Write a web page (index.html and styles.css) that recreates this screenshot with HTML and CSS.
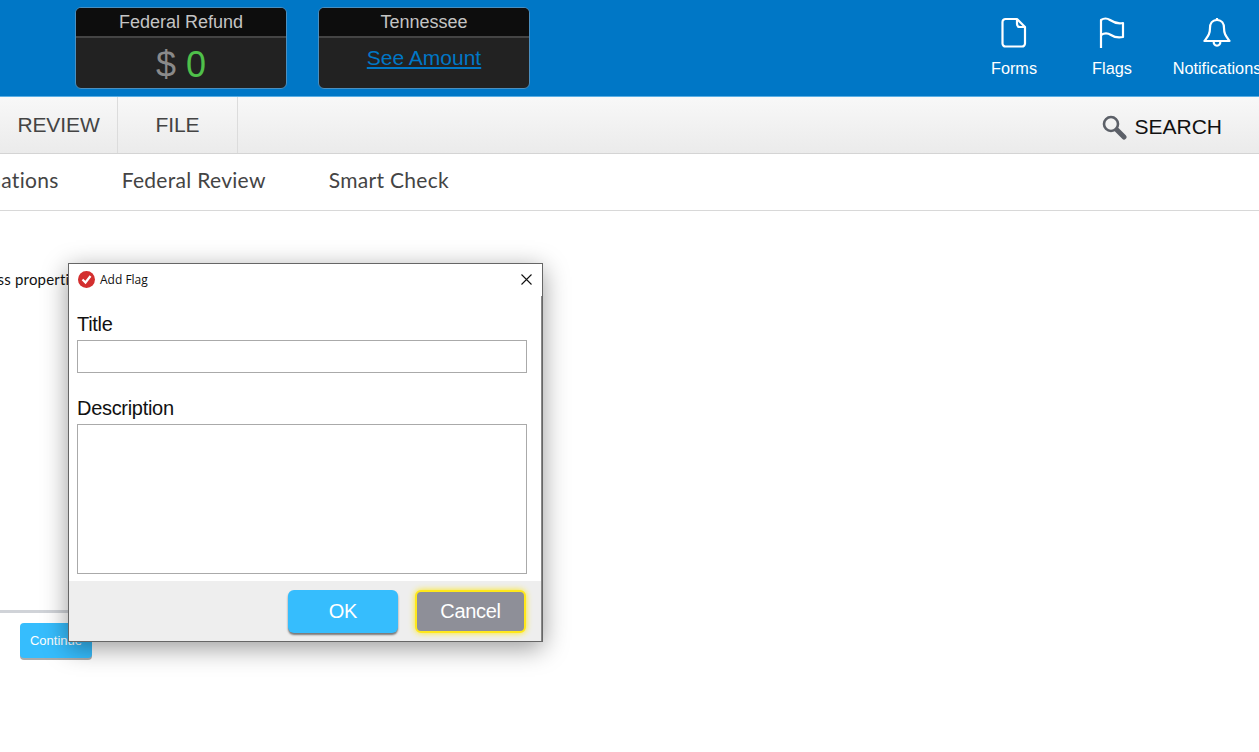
FILE: index.html
```html
<!DOCTYPE html>
<html lang="en">
  <head>
    <meta charset="UTF-8" />
    <title>Add Flag</title>
    <link rel="stylesheet" href="styles.css">
  </head>
  <body>
    <header class="topbar">
      <div class="refund-card">
        <div class="refund-title">Federal Refund</div>
        <div class="refund-body"><span class="dollar">$</span> <span class="amount">0</span></div>
      </div>
      <div class="refund-card">
        <div class="refund-title">Tennessee</div>
        <div class="refund-link"><a class="see-amount" href="#">See Amount</a></div>
      </div>
      <div class="tools">
        <a class="tool tool-forms" href="#">
          <svg width="26" height="32" viewBox="0 0 26 32" fill="none" stroke="#fff" stroke-width="2.200" stroke-linejoin="round">
            <path d="M4.500 2H16l8 8v16.500a3 3 0 0 1-3 3H4.500a3 3 0 0 1-3-3V5a3 3 0 0 1 3-3z"/>
            <path d="M16 2v5a3 3 0 0 0 3 3h5"/>
          </svg>
          <span>Forms</span>
        </a>
        <a class="tool tool-flags" href="#">
          <svg width="26" height="32" viewBox="0 0 26 32" fill="none" stroke="#fff" stroke-width="2.200" stroke-linejoin="round">
            <path d="M2 31V3c3-2 6-2 9 0 3 2 8 4 13 3v14c-5 1-9 0-12-2-3-2-7-2-10 0"/>
          </svg>
          <span>Flags</span>
        </a>
        <a class="tool tool-bell" href="#">
          <svg width="28" height="32" viewBox="0 0 28 32" fill="none" stroke="#fff" stroke-width="2.200" stroke-linejoin="round">
            <path d="M14 3c-5 0-7 4-7 8 0 6-2 8-5.500 13h25C23 19 21 17 21 11c0-4-2-8-7-8z"/>
            <path d="M14 1v2"/>
            <path d="M10.800 24.500a3.300 3.300 0 1 0 6.400 0"/>
          </svg>
          <span>Notifications</span>
        </a>
      </div>
    </header>

    <nav class="mainnav">
      <a class="tab tab-first" href="#">REVIEW</a>
      <a class="tab" href="#">FILE</a>
      <a class="search" href="#">
        <svg width="26" height="26" viewBox="0 0 26 26" fill="none">
          <circle cx="10" cy="10" r="7" stroke="#5c6068" stroke-width="2.600"/>
          <path d="M16 16l7 7" stroke="#5c6068" stroke-width="5" stroke-linecap="round"/>
        </svg>
        <span>SEARCH</span>
      </a>
    </nav>

    <div class="subnav">
      <a class="subnav-first" href="#">Explanations</a>
      <a href="#">Federal Review</a>
      <a href="#">Smart Check</a>
    </div>

    <main class="content">
      <p class="question">Business properties</p>
      <hr class="rule">
      <button class="continue">Continue</button>
    </main>

    <div class="dialog">
      <div class="dialog-title">
        <svg width="17" height="17" viewBox="0 0 17 17">
          <circle cx="8.500" cy="8.500" r="8.500" fill="#d32f2f"/>
          <path d="M4.500 8.500l3 3 5-6.500" fill="none" stroke="#fff" stroke-width="2.200"/>
        </svg>
        <span class="dialog-name">Add Flag</span>
        <svg class="dialog-close" width="11" height="11" viewBox="0 0 11 11">
          <path d="M.5.500l10 10M10.500.500l-10 10" stroke="#111" stroke-width="1.100"/>
        </svg>
      </div>
      <div class="dialog-body">
        <label class="field-label">Title</label>
        <input class="field-input" type="text">
        <label class="field-label field-label-desc">Description</label>
        <textarea class="field-area"></textarea>
      </div>
      <div class="dialog-footer">
        <button class="btn btn-ok">OK</button>
        <button class="btn btn-cancel">Cancel</button>
      </div>
    </div>
  </body>
</html>
```

FILE: styles.css
```css
html, body {
  height: 100%;
}

body {
  margin: 0;
  font-family: "Liberation Sans", Arial, sans-serif;
  background: #fff;
  overflow: hidden;
  position: relative;
}

a {
  text-decoration: none;
}

.topbar {
  height: 89px;
  background: #0077c6;
  border-bottom: 1px solid #5aaee3;
  display: flex;
  align-items: flex-start;
  gap: 31px;
  padding: 7px 0 0 75px;
}

.refund-card {
  width: 210px;
  height: 80px;
  flex: none;
  background: #222;
  border: 1px solid #4a8fc0;
  border-radius: 6px;
  overflow: hidden;
}

.refund-title {
  height: 28px;
  line-height: 28px;
  background: #0d0d0d;
  border-bottom: 2px solid #444;
  color: #c4c4c4;
  font-size: 18px;
  text-align: center;
}

.refund-body {
  text-align: center;
  height: 50px;
  font-size: 36px;
  line-height: 53px;
}

.refund-link {
  text-align: center;
  height: 50px;
}

.dollar {
  color: #8a8a8a;
}

.amount {
  color: #4fc04a;
}

.see-amount {
  color: #0077c6;
  font-size: 21px;
  line-height: 40px;
  text-decoration: underline;
}

.tools {
  margin-left: auto;
  display: flex;
  align-items: flex-start;
  margin-right: -14px;
  padding-top: 10px;
}

.tool {
  display: flex;
  flex-direction: column;
  align-items: center;
  gap: 10px;
  color: #fff;
  font-size: 16.300px;
  line-height: 18px;
  white-space: nowrap;
}

.tool-forms,
.tool-flags {
  width: 98px;
}

.tool-bell {
  width: 112px;
}

.mainnav {
  height: 56px;
  display: flex;
  background: linear-gradient(#f8f8f8, #ebebeb);
  border-bottom: 1px solid #d4d4d4;
}

.tab {
  width: 119px;
  line-height: 55px;
  text-align: center;
  color: #444;
  font-size: 21px;
  letter-spacing: -0.1px;
  border-right: 1px solid #dcdcdc;
}

.tab-first {
  width: 117px;
}

.search {
  margin-left: auto;
  margin-right: 37px;
  padding-top: 3px;
  display: flex;
  align-items: center;
  gap: 7px;
  color: #111;
  font-size: 21px;
}

.subnav {
  height: 51px;
  padding-bottom: 5px;
  display: flex;
  align-items: center;
  gap: 63px;
  border-bottom: 1px solid #d8d8d8;
  font-family: Lato, sans-serif;
  font-size: 21px;
  letter-spacing: 0.3px;
  white-space: nowrap;
}

.subnav a {
  color: #444;
}

.subnav-first {
  margin-left: -62px;
}

.content {
  height: 400px;
}

.question {
  margin: 58px 0 0 -48px;
  font-family: Lato, sans-serif;
  font-size: 15px;
  letter-spacing: 0.2px;
  line-height: 20px;
  color: #111;
  white-space: nowrap;
}

.rule {
  margin: 321px 0 0;
  width: 400px;
  height: 3px;
  border: 0;
  background: #d0d3d8;
}

.continue {
  display: block;
  margin: 10px 0 0 20px;
  width: 72px;
  height: 35px;
  border: 0;
  border-radius: 4px;
  background: #36bdfd;
  box-shadow: 0 2px 0 #aaa;
  color: #fff;
  font-family: "Liberation Sans", Arial, sans-serif;
  font-size: 13px;
}

.dialog {
  position: absolute;
  left: 68px;
  top: 263px;
  width: 473px;
  height: 377px;
  background: #fff;
  border: 1px solid #666;
  box-shadow: 0 6px 24px rgba(0, 0, 0, 0.4);
  display: flex;
  flex-direction: column;
}

.dialog-title {
  height: 31px;
  padding: 0 10px 1px 9px;
  flex: none;
  display: flex;
  align-items: center;
  gap: 5px;
}

.dialog-name {
  font-family: "Open Sans", sans-serif;
  font-size: 12px;
  color: #111;
}

.dialog-close {
  margin-left: auto;
}

.dialog-body {
  flex: 1;
  padding: 16px 14px 0 8px;
  display: flex;
  flex-direction: column;
  border-right: 1px solid #888;
}

.field-label {
  font-size: 20px;
  letter-spacing: -0.3px;
  line-height: 24px;
  color: #111;
  margin-bottom: 4px;
}

.field-label-desc {
  margin-top: 23px;
}

.field-input {
  height: 33px;
  box-sizing: border-box;
  border: 1px solid #aaa;
  padding: 0;
  margin: 0;
}

.field-area {
  height: 150px;
  box-sizing: border-box;
  border: 1px solid #aaa;
  padding: 0;
  margin: 0;
  resize: none;
}

.dialog-footer {
  height: 60px;
  box-sizing: border-box;
  flex: none;
  background: #eee;
  display: flex;
  align-items: flex-start;
  justify-content: flex-end;
  gap: 17px;
  padding: 9px 15px 0 0;
  border-right: 1px solid #888;
}

.btn {
  width: 110px;
  height: 43px;
  border: 0;
  border-radius: 6px;
  color: #fff;
  font-family: "Liberation Sans", Arial, sans-serif;
  font-size: 20px;
  letter-spacing: -0.3px;
}

.btn-ok {
  background: #36bdfd;
  box-shadow: 0 2px 2px #777;
}

.btn-cancel {
  width: 111px;
  background: #8e8f98;
  border: 2px solid #ffe81a;
  box-shadow: 0 0 6px #ffe81a;
}
```
